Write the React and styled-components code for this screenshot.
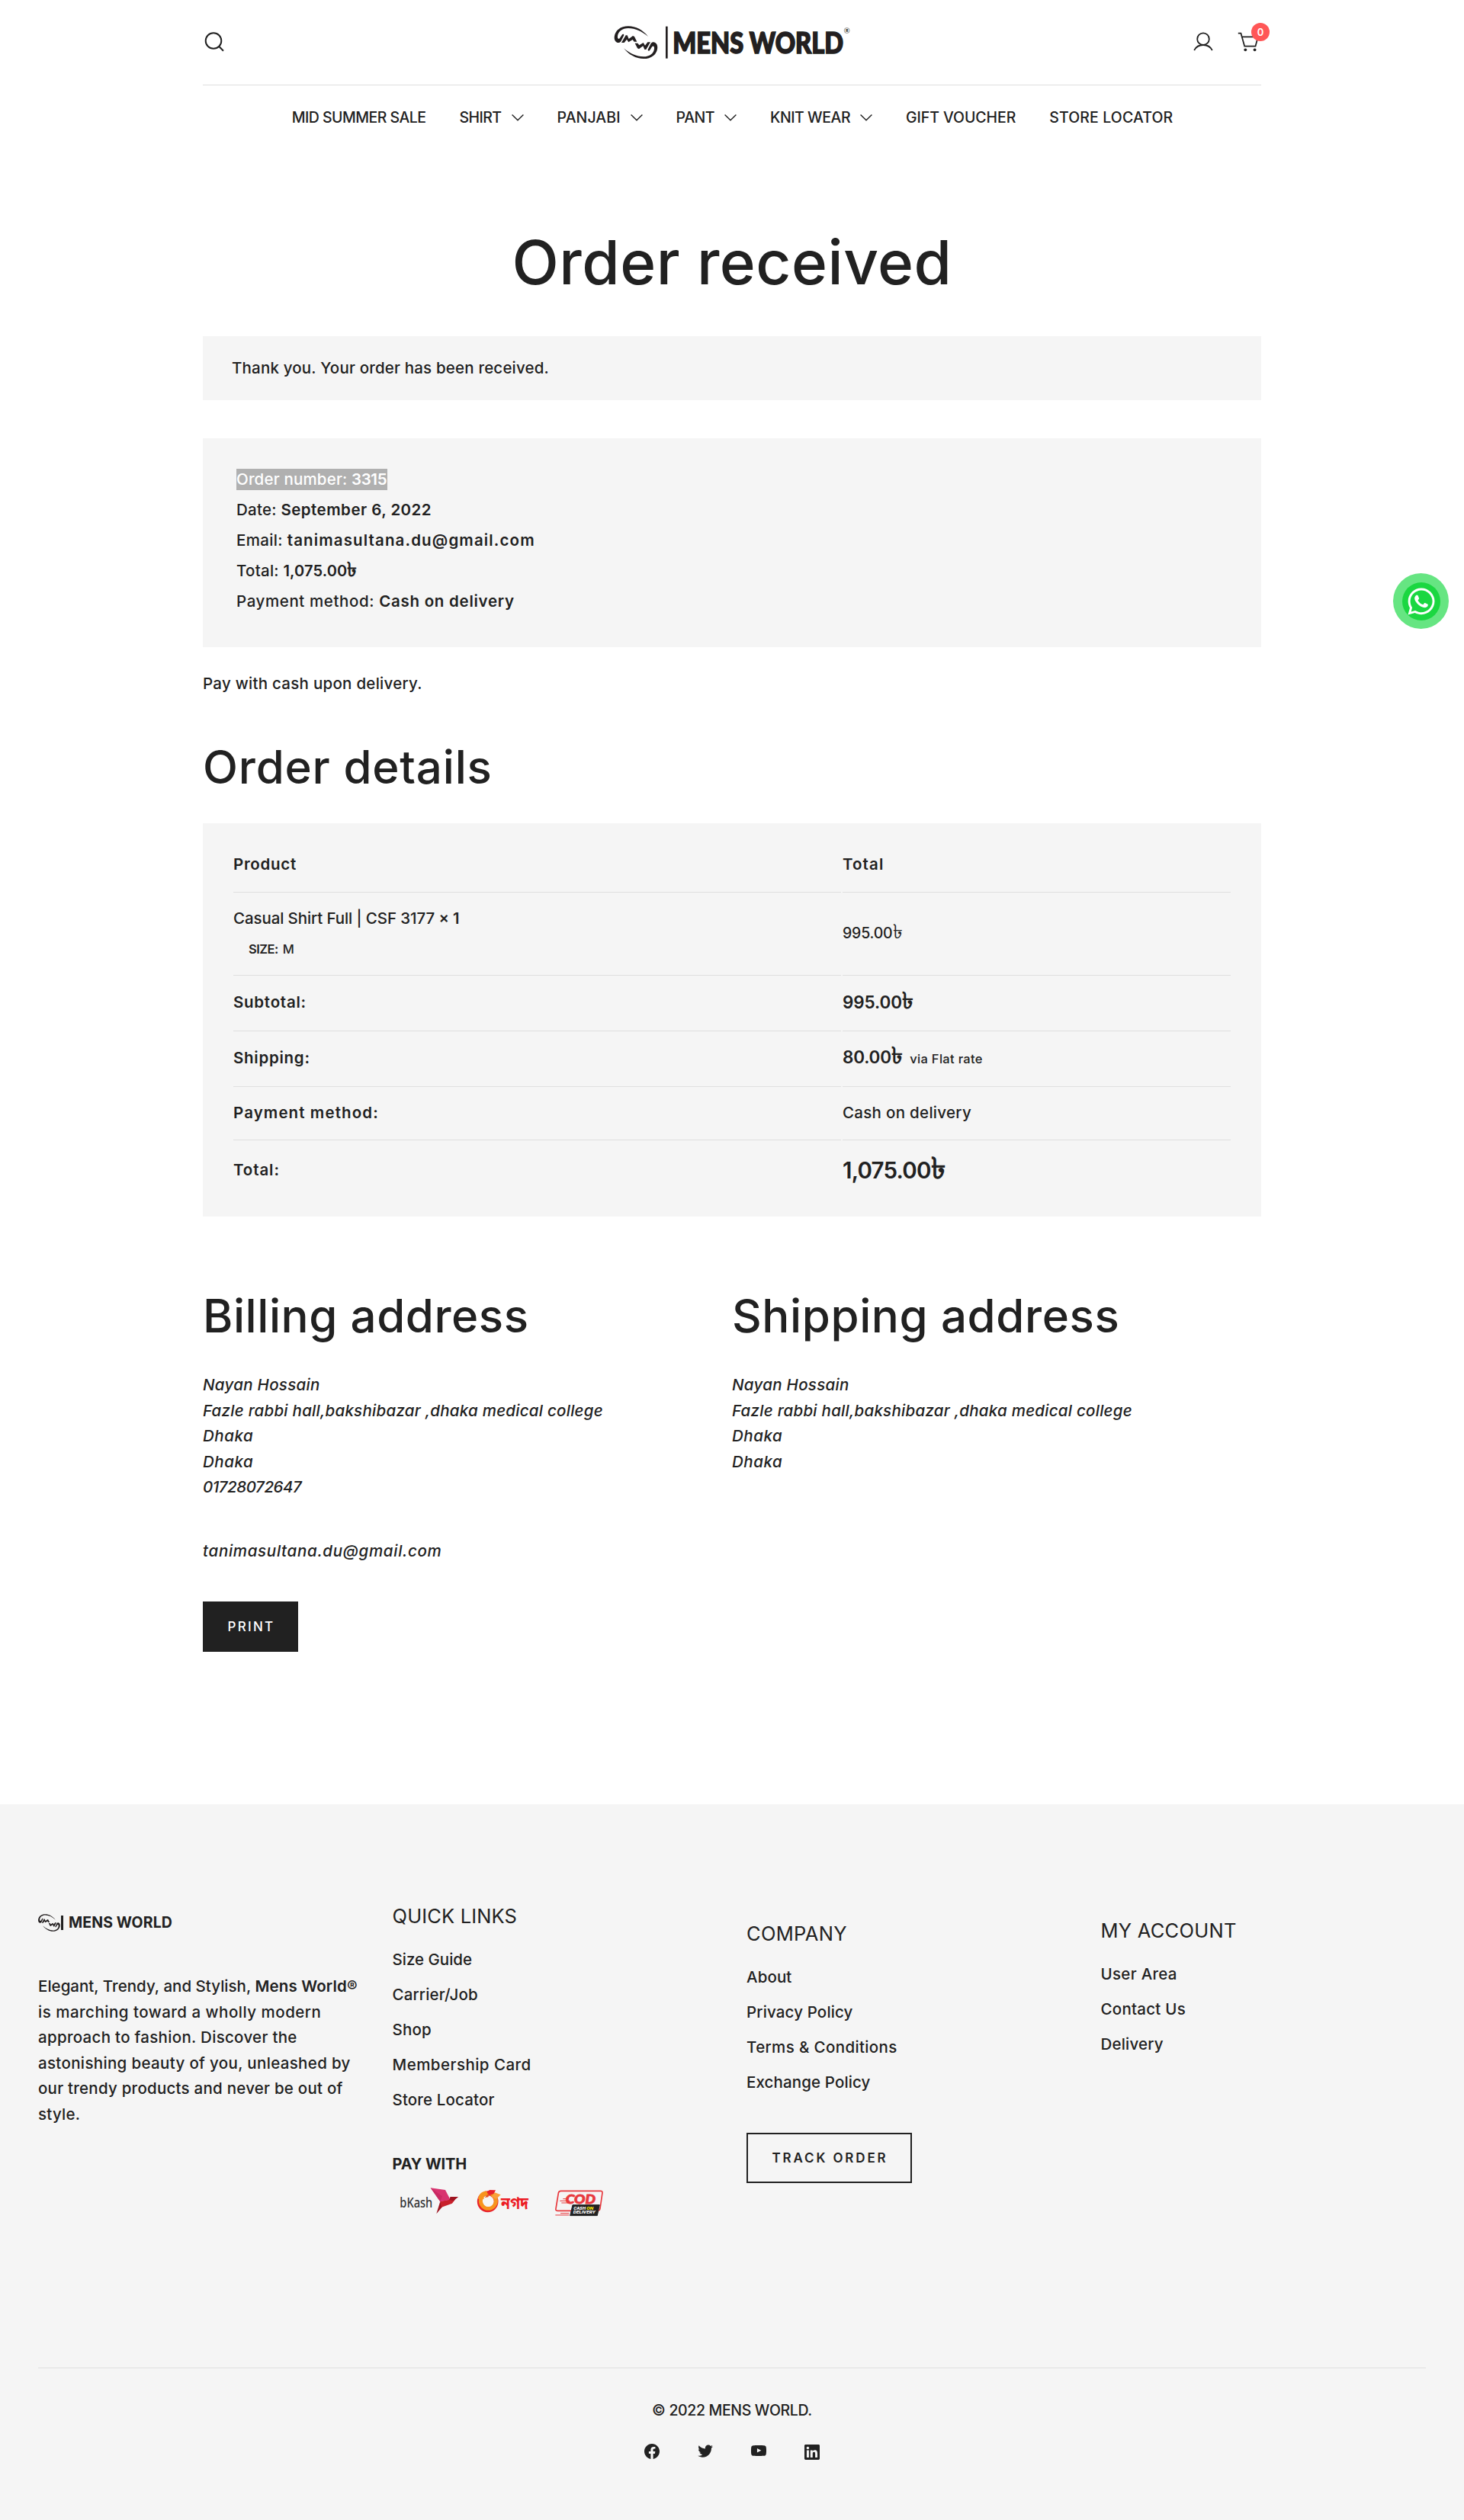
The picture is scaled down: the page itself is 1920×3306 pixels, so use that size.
import React from "react";
import styled, { createGlobalStyle, css } from "styled-components";
import { FaWhatsapp } from "react-icons/fa";

const INK = "#212121";
const PANEL = "#f5f5f5";
const LINE = "#dfdfdf";

const GlobalStyle = createGlobalStyle`
  * { box-sizing: border-box; }
  body {
    margin: 0;
    background: #fff;
    color: ${INK};
    font-family: Inter, "Noto Sans", sans-serif;
    font-size: 20.5px;
    font-weight: 500;
    line-height: 34px;
  }
  svg { display: block; flex: none; overflow: visible; }
`;

const T = styled.span`
  white-space: pre;
  letter-spacing: ${(p) => p.$ls || 0}px;
  ${(p) => p.$size && css`font-size: ${p.$size}px;`}
`;
const B = styled(T)`font-weight: 600;`;
const Sign = styled.span`
  font-size: 1.32em;
  line-height: 0;
  letter-spacing: 0;
`;
const Taka = () => <Sign>৳</Sign>;

/* ---------- layout shells ---------- */
const Page = styled.div`position: relative; width: 1920px;`;
const Container = styled.div`width: 1388px; margin: 0 auto;`;

/* ---------- header ---------- */
const TopBar = styled.div`
  display: grid;
  grid-template-columns: 1fr auto 1fr;
  align-items: start;
  height: 112px;
  border-bottom: 1px solid ${LINE};
`;
const SearchSlot = styled.div`padding: 42px 0 0 2px;`;
const LogoSlot = styled.div`padding: 32px 0 0 2px;`;
const Tools = styled.div`
  display: flex;
  justify-content: flex-end;
  gap: 32px;
  padding: 42px 3px 0 0;
`;
const CartButton = styled.div`position: relative;`;
const Badge = styled.span`
  position: absolute;
  top: -12px;
  right: -14px;
  width: 24px;
  height: 24px;
  border-radius: 50%;
  background: #ff5757;
  color: #fff;
  font-size: 13px;
  font-weight: 600;
  line-height: 25px;
  text-align: center;
`;
const Nav = styled.nav`
  display: flex;
  align-items: center;
  justify-content: center;
  gap: 44px;
  height: 84px;
  padding-left: 1px;
`;
const NavItem = styled.a`
  display: flex;
  align-items: center;
  gap: 13px;
  font-size: 19.5px;
`;

/* ---------- order ---------- */
const Title = styled.h1`
  margin: 100px 0 49px;
  font-size: 80px;
  font-weight: 500;
  line-height: 96px;
  text-align: center;
`;
const Heading = styled.h2`
  margin: ${(p) => p.$mt || 0}px 0 38px;
  font-size: 60px;
  font-weight: 500;
  line-height: 72px;
`;
const Notice = styled.div`
  display: flex;
  align-items: center;
  height: 84px;
  padding-left: 38px;
  background: ${PANEL};
`;
const Overview = styled.ul`
  list-style: none;
  margin: 50px 0 31px;
  padding: 34px 44px 40px;
  background: ${PANEL};
`;
const OverviewRow = styled.li`
  display: flex;
  align-items: center;
  height: 40px;
`;
const Selected = styled.span`
  display: block;
  width: 198px;
  background: #b0b0b0;
  color: #fff;
  line-height: 28px;
`;
const Note = styled.p`margin: 0;`;

const Details = styled.div`
  height: 516px;
  padding: 17px 40px 0;
  background: ${PANEL};
`;
const DetailRow = styled.div`
  display: grid;
  grid-template-columns: 797px 509px;
  gap: 2px;
  height: ${(p) => p.$h}px;
`;
const Cell = styled.div`
  display: flex;
  align-items: ${(p) => (p.$stack ? "flex-start" : "center")};
  ${(p) => p.$stack && css`flex-direction: column; justify-content: center; gap: 6px;`}
  padding-bottom: ${(p) => p.$pb || 0}px;
  border-bottom: 1px solid ${(p) => (p.$last ? "transparent" : LINE)};
`;
const Price = styled.div`display: flex; align-items: baseline;`;
const Meta = styled.div`
  display: flex;
  gap: 6px;
  padding-left: 20px;
  font-size: 16.5px;
`;

const Addresses = styled.div`
  display: grid;
  grid-template-columns: 1fr 1fr;
  margin-top: 94px;
`;
const Address = styled.address`
  font-style: italic;
  line-height: 33.5px;
`;
const AddressLine = styled.div`margin-top: ${(p) => p.$mt || 0}px;`;
const PrintButton = styled.button`
  display: block;
  width: 125px;
  height: 66px;
  margin-top: 50px;
  padding: 0 0 0 2px;
  border: 0;
  background: ${INK};
  color: #fff;
  font: 500 17px/66px Inter, sans-serif;
`;

/* ---------- footer ---------- */
const Footer = styled.footer`
  height: 939px;
  margin-top: 200px;
  padding: 0 50px;
  background: ${PANEL};
`;
const Columns = styled.div`
  display: grid;
  grid-template-columns: repeat(4, 426.5px);
  column-gap: 38px;
  height: 739px;
`;
const Column = styled.section`padding-top: ${(p) => p.$top}px;`;
const Brand = styled.div`
  display: flex;
  align-items: center;
  height: 34px;
  margin-bottom: 50px;
`;
const BrandBar = styled.span`
  width: 3px;
  height: 19px;
  margin: 0 7px 0 1px;
  background: ${INK};
`;
const BrandName = styled.span`
  font-weight: 700;
  font-size: 19.5px;
  white-space: pre;
`;
const About = styled.p`margin: 0; line-height: 33.5px;`;
const AboutLine = styled.span`display: block; white-space: nowrap;`;
const FootTitle = styled.h3`
  margin: 0 0 15.5px;
  font-size: 25.5px;
  font-weight: 400;
  line-height: 36px;
`;
const Links = styled.ul`list-style: none; margin: 0; padding: 0;`;
const LinkItem = styled.li`height: 46.2px; line-height: 46.2px;`;
const PayTitle = styled.div`margin-top: 43.5px; font-size: 20px; font-weight: 700;`;
const PayRow = styled.div`
  display: flex;
  align-items: flex-start;
  padding: 14px 0 0 9px;
`;
const PayLogo = styled.div`margin: ${(p) => p.$m};`;
const TrackButton = styled.button`
  display: block;
  width: 217px;
  height: 66px;
  margin-top: 43px;
  padding: 0 0 0 2px;
  border: 2px solid ${INK};
  background: transparent;
  color: ${INK};
  font: 600 17px/62px Inter, sans-serif;
`;
const Bottom = styled.div`
  display: flex;
  flex-direction: column;
  align-items: center;
  padding-top: 38px;
  border-top: 1px solid ${LINE};
`;
const Socials = styled.div`
  display: flex;
  align-items: center;
  gap: 50px;
  margin-top: 26px;
`;
const SocialLink = styled.a`padding-top: ${(p) => p.$pt || 0}px; padding-bottom: ${(p) => p.$pb || 0}px;`;

/* ---------- floating chat ---------- */
const ChatHalo = styled.a`
  position: absolute;
  top: 752px;
  left: 1827px;
  display: grid;
  place-items: center;
  width: 73px;
  height: 73px;
  border-radius: 50%;
  background: #66e582;
`;
const ChatCore = styled.span`
  display: grid;
  place-items: center;
  width: 50px;
  height: 50px;
  border-radius: 50%;
  background: #1bd741;
  color: #fff;
`;

/* ---------- drawings ---------- */
const HalfMark = () => (
  <>
    <path
      d="M210 84C186 64 160 51 132 51C108 51 92 64 90 82C89 92 93 95 98 91L107 77C110 72 116 74 115 79L103 103C97 112 84 109 79 98C74 84 80 66 92 56C104 46 117 43 132 43C161 43 190 58 210 84Z"
      fill="#231f20"
    />
    <path d="M105 108L122 79L128 79L134 93L150 81L156 84L166 104L155 104L149 96L133 106L126 95L116 108Z" fill="#231f20" />
  </>
);
const MarkShape = () => (
  <>
    <HalfMark />
    <g transform="rotate(180 162 107)"><HalfMark /></g>
  </>
);
const Logo = () => (
  <svg width="312" height="48" viewBox="75 36 936 144">
    <MarkShape />
    <rect x="279" y="44" width="8" height="126" fill="#231f20" />
    <text x="307" y="151" fontFamily="Lato, sans-serif" fontWeight="900" fontSize="115" fill="#231f20"
      stroke="#231f20" strokeWidth="5" textLength="671" lengthAdjust="spacingAndGlyphs">MENS WORLD</text>
    <circle cx="992" cy="60" r="10.5" fill="none" stroke="#555" strokeWidth="1.8" />
    <text x="992" y="66" textAnchor="middle" fontFamily="Inter, sans-serif" fontWeight="700" fontSize="16" fill="#231f20">R</text>
  </svg>
);
const SmallMark = () => (
  <svg width="29" height="23" viewBox="77 42 171 130" preserveAspectRatio="none"><MarkShape /></svg>
);
const SearchIcon = () => (
  <svg width="26" height="26" viewBox="0 0 26 26" fill="none" stroke={INK} strokeWidth="2">
    <circle cx="12" cy="11.5" r="10.3" /><path d="M19.3 19L25 24.8" />
  </svg>
);
const UserIcon = () => (
  <svg width="26" height="26" viewBox="0 0 26 26" fill="none" stroke={INK} strokeWidth="1.8">
    <circle cx="13" cy="9.2" r="7.8" /><path d="M1.2 24C3.4 19.6 7.6 17 13 17S22.6 19.6 24.8 24" />
  </svg>
);
const CartIcon = () => (
  <svg width="28" height="26" viewBox="0 0 28 26" fill="none" stroke={INK} strokeWidth="1.8">
    <path d="M.8 1.6H4.4L9.2 18.7H23.5L26.8 6.4H5.8" />
    <circle cx="10.3" cy="23.3" r="1.9" fill={INK} stroke="none" />
    <circle cx="22.6" cy="23.3" r="1.9" fill={INK} stroke="none" />
  </svg>
);
const Chevron = () => (
  <svg width="16" height="10" viewBox="0 0 16 10" fill="none" stroke={INK} strokeWidth="1.4">
    <path d="M.6 1.4L8 8.8L15.4 1.4" />
  </svg>
);
const Bkash = () => (
  <svg width="77.3" height="34.7" viewBox="72 60 232 104">
    <text x="73" y="139" fontFamily="'Noto Sans', sans-serif" fontSize="52" fill="#333" textLength="129" lengthAdjust="spacingAndGlyphs">bKash</text>
    <path d="M194 61L252 69L272 107L232 115Z" fill="#d8336f" />
    <path d="M194 61L240 94L232 115Z" fill="#c92a63" />
    <path d="M232 115L272 107L238 135Z" fill="#e2136e" />
    <path d="M232 115L240 136L217 163Z" fill="#9e1420" />
    <path d="M272 96L303 96L292 105L279 122L237 137L232 115L272 107Z" fill="#c8202b" />
    <path d="M272 96L303 96L292 105L286 112L268 108Z" fill="#9e1420" />
  </svg>
);
const Nagad = () => (
  <svg width="68.7" height="30.7" viewBox="378 66 206 92">
    <circle cx="422" cy="115" r="33" fill="none" stroke="#e8222b" strokeWidth="17" />
    <circle cx="424" cy="112" r="30" fill="none" stroke="#f7941e" strokeWidth="15" />
    <path d="M418 76L430 69L453 70L446 84L426 91Z" fill="#e8222b" />
    <path d="M449 79L473 88L456 104L436 97Z" fill="#f9a13a" />
    <path d="M384 104C386 86 400 74 418 73C404 82 402 94 408 104Z" fill="#f7941e" />
    <circle cx="424" cy="115" r="20" fill={PANEL} />
    <path d="M410 99C416 94 420 84 428 84L424 97Z" fill="#e8541e" />
    <text x="474" y="143" fontFamily="'Noto Sans Bengali', 'Noto Sans', sans-serif" fontWeight="700" fontSize="64" fill="#ec1c24"
      textLength="108" lengthAdjust="spacingAndGlyphs">নগদ</text>
  </svg>
);
const Cod = () => (
  <svg width="64" height="35.3" viewBox="684 70 192 106">
    <path d="M690 143L700 82Q702 74 710 74H866Q874 74 873 82L864 144Q862 152 854 152H696Q688 152 690 143Z" fill="none" stroke="#e8383d" strokeWidth="5" />
    <path d="M706 113H745M712 121H745M718 105H740" stroke="#e8383d" strokeWidth="3" />
    <text x="728" y="125" fontFamily="Lato, sans-serif" fontWeight="900" fontStyle="italic" fontSize="49" fill="#e8383d"
      stroke="#e8383d" strokeWidth="2.5" textLength="118" lengthAdjust="spacingAndGlyphs">COD</text>
    <path d="M756 129H862L853 171H746Z" fill="#222" stroke="#222" strokeWidth="3" strokeLinejoin="round" />
    <g fontFamily="Inter, sans-serif" fontWeight="800" fontStyle="italic" fontSize="16" fill="#fff">
      <text x="760" y="148" textLength="47" lengthAdjust="spacingAndGlyphs">CASH</text>
      <text x="811" y="148" fill="#ffef00" textLength="27" lengthAdjust="spacingAndGlyphs">ON</text>
      <text x="758" y="164" textLength="88" lengthAdjust="spacingAndGlyphs">DELIVERY</text>
    </g>
    <path d="M708 162H742M688 169H742" stroke="#e8383d" strokeWidth="3" />
  </svg>
);
const FACEBOOK = "M12 2C6.5 2 2 6.5 2 12c0 5 3.7 9.1 8.4 9.9v-7H7.9V12h2.5V9.8c0-2.5 1.5-3.9 3.8-3.9 1.1 0 2.2.2 2.2.2v2.5h-1.3c-1.2 0-1.6.8-1.6 1.6V12h2.8l-.4 2.9h-2.3v7C18.3 21.1 22 17 22 12c0-5.5-4.5-10-10-10z";
const TWITTER = "M22.23,5.924c-0.736,0.326-1.527,0.547-2.357,0.646c0.847-0.508,1.498-1.312,1.804-2.27c-0.793,0.47-1.671,0.812-2.606,0.996C18.324,4.498,17.257,4,16.077,4c-2.266,0-4.103,1.837-4.103,4.103c0,0.322,0.036,0.635,0.106,0.935C8.67,8.867,5.647,7.234,3.623,4.751C3.27,5.357,3.067,6.062,3.067,6.814c0,1.424,0.724,2.679,1.825,3.415c-0.673-0.021-1.305-0.206-1.859-0.513c0,0.017,0,0.034,0,0.052c0,1.988,1.414,3.647,3.292,4.023c-0.344,0.094-0.707,0.144-1.081,0.144c-0.264,0-0.521-0.026-0.772-0.074c0.522,1.63,2.038,2.816,3.833,2.85c-1.404,1.1-3.174,1.756-5.096,1.756c-0.331,0-0.658-0.019-0.979-0.057c1.816,1.164,3.973,1.843,6.29,1.843c7.547,0,11.675-6.252,11.675-11.675c0-0.178-0.004-0.355-0.012-0.531C20.985,7.47,21.68,6.747,22.23,5.924z";
const YOUTUBE = "M21.8,8.001c0,0-0.195-1.378-0.795-1.985c-0.76-0.797-1.613-0.801-2.004-0.847c-2.799-0.202-6.997-0.202-6.997-0.202h-0.009c0,0-4.198,0-6.997,0.202C4.608,5.216,3.756,5.22,2.995,6.016C2.395,6.623,2.2,8.001,2.2,8.001S2,9.62,2,11.238v1.517c0,1.618,0.2,3.237,0.2,3.237s0.195,1.378,0.795,1.985c0.761,0.797,1.76,0.771,2.205,0.855c1.6,0.153,6.8,0.201,6.8,0.201s4.203-0.006,7.001-0.209c0.391-0.047,1.243-0.051,2.004-0.847c0.6-0.607,0.795-1.985,0.795-1.985s0.2-1.618,0.2-3.237v-1.517C22,9.62,21.8,8.001,21.8,8.001z M9.935,14.594l-0.001-5.62l5.404,2.82L9.935,14.594z";
const LINKEDIN = "M19.7,3H4.3C3.582,3,3,3.582,3,4.3v15.4C3,20.418,3.582,21,4.3,21h15.4c0.718,0,1.3-0.582,1.3-1.3V4.3C21,3.582,20.418,3,19.7,3z M8.339,18.338H5.667v-8.59h2.672V18.338z M7.004,8.574c-0.857,0-1.549-0.694-1.549-1.548c0-0.855,0.691-1.548,1.549-1.548c0.854,0,1.547,0.694,1.547,1.548C8.551,7.881,7.858,8.574,7.004,8.574z M18.339,18.338h-2.669v-4.177c0-0.996-0.017-2.278-1.387-2.278c-1.389,0-1.601,1.086-1.601,2.206v4.249h-2.667v-8.59h2.559v1.174h0.037c0.356-0.675,1.227-1.387,2.526-1.387c2.703,0,3.203,1.779,3.203,4.092V18.338z";

/* ---------- data ---------- */
const NAV = [
  ["MID SUMMER SALE", -0.53, false],
  ["SHIRT", -0.55, true],
  ["PANJABI", 0.1, true],
  ["PANT", -0.5, true],
  ["KNIT WEAR", -0.45, true],
  ["GIFT VOUCHER", -0.07, false],
  ["STORE LOCATOR", 0.12, false],
];
const QUICK = [["Size Guide", 0], ["Carrier/Job", 0.15], ["Shop", 0.2], ["Membership Card", 0.47], ["Store Locator", 0.15]];
const COMPANY = [["About", 0.1], ["Privacy Policy", 0.15], ["Terms & Conditions", 0.37], ["Exchange Policy", 0.12]];
const ACCOUNT = [["User Area", 0.3], ["Contact Us", 0.25], ["Delivery", 0.2]];

const LinkList = ({ items }) => (
  <Links>
    {items.map(([label, ls]) => (
      <LinkItem key={label}><T $ls={ls}>{label}</T></LinkItem>
    ))}
  </Links>
);
const SharedAddress = () => (
  <>
    <AddressLine><T $ls={0.3}>Nayan Hossain</T></AddressLine>
    <AddressLine><T $ls={0.27}>Fazle rabbi hall,bakshibazar ,dhaka medical college</T></AddressLine>
    <AddressLine><T $ls={0.55}>Dhaka</T></AddressLine>
    <AddressLine><T $ls={0.55}>Dhaka</T></AddressLine>
  </>
);

export default function App() {
  return (
    <Page>
      <GlobalStyle />
      <Container>
        <TopBar>
          <SearchSlot><SearchIcon /></SearchSlot>
          <LogoSlot><Logo /></LogoSlot>
          <Tools>
            <UserIcon />
            <CartButton><CartIcon /><Badge>0</Badge></CartButton>
          </Tools>
        </TopBar>
        <Nav>
          {NAV.map(([label, ls, more]) => (
            <NavItem key={label}><T $ls={ls}>{label}</T>{more && <Chevron />}</NavItem>
          ))}
        </Nav>

        <Title><T $ls={0.5}>Order received</T></Title>
        <Notice><T $ls={0.18}>Thank you. Your order has been received.</T></Notice>
        <Overview>
          <OverviewRow><Selected><T $ls={0.18}>Order number: </T><B $ls={-0.4}>3315</B></Selected></OverviewRow>
          <OverviewRow><T $ls={0.25}>Date: </T><B $ls={0.47}>September 6, 2022</B></OverviewRow>
          <OverviewRow><T $ls={0.35}>Email: </T><B $ls={1.13}>tanimasultana.du@gmail.com</B></OverviewRow>
          <OverviewRow><T $ls={0.25}>Total: </T><B $size={20} $ls={0.15}>1,075.00<Taka /></B></OverviewRow>
          <OverviewRow><T $ls={0.6}>Payment method: </T><B $ls={0.73}>Cash on delivery</B></OverviewRow>
        </Overview>
        <Note><T $ls={0.27}>Pay with cash upon delivery.</T></Note>

        <Heading $mt={56}><T $ls={0.8}>Order details</T></Heading>
        <Details>
          <DetailRow $h={74}>
            <Cell><B $ls={0.7}>Product</B></Cell>
            <Cell><B $ls={1.1}>Total</B></Cell>
          </DetailRow>
          <DetailRow $h={109}>
            <Cell $stack>
              <div><T $ls={-0.1}>Casual Shirt Full | CSF 3177 </T><B $size={20}>× 1</B></div>
              <Meta><B $ls={-0.5}>SIZE:</B><T>M</T></Meta>
            </Cell>
            <Cell $pb={2}><T $size={19.5} $ls={-0.2}>995.00<Taka /></T></Cell>
          </DetailRow>
          <DetailRow $h={73}>
            <Cell $pb={2}><B $ls={0.73}>Subtotal:</B></Cell>
            <Cell $pb={2}><B $size={22.5} $ls={-0.1}>995.00<Taka /></B></Cell>
          </DetailRow>
          <DetailRow $h={73}>
            <Cell $pb={2}><B $ls={0.73}>Shipping:</B></Cell>
            <Cell $pb={2}>
              <Price><B $size={22.5} $ls={-0.2}>80.00<Taka /></B><T $size={16.5} $ls={0.3}>  via Flat rate</T></Price>
            </Cell>
          </DetailRow>
          <DetailRow $h={70}>
            <Cell $pb={2}><B $ls={1.1}>Payment method:</B></Cell>
            <Cell $pb={2}><T $ls={0.3}>Cash on delivery</T></Cell>
          </DetailRow>
          <DetailRow $h={78}>
            <Cell $last><B $ls={0.9}>Total:</B></Cell>
            <Cell $last><B $size={29.5} $ls={-0.8}>1,075.00<Taka /></B></Cell>
          </DetailRow>
        </Details>

        <Addresses>
          <div>
            <Heading><T $ls={0.55}>Billing address</T></Heading>
            <Address>
              <SharedAddress />
              <AddressLine><T $ls={-0.45}>01728072647</T></AddressLine>
              <AddressLine $mt={50}><T $ls={0.7}>tanimasultana.du@gmail.com</T></AddressLine>
            </Address>
          </div>
          <div>
            <Heading><T $ls={0.6}>Shipping address</T></Heading>
            <Address><SharedAddress /></Address>
          </div>
        </Addresses>
        <PrintButton><T $ls={2.3}>PRINT</T></PrintButton>
      </Container>

      <Footer>
        <Columns>
          <Column $top={138}>
            <Brand><SmallMark /><BrandBar /><BrandName><T $ls={0.1}>MENS WORLD</T></BrandName></Brand>
            <About>
              <AboutLine><T $ls={0.02}>Elegant, Trendy, and Stylish, </T><B $ls={0.15}>Mens World®</B></AboutLine>
              <AboutLine><T $ls={0.5}>is marching toward a wholly modern</T></AboutLine>
              <AboutLine><T $ls={0.3}>approach to fashion. Discover the</T></AboutLine>
              <AboutLine><T $ls={0.34}>astonishing beauty of you, unleashed by</T></AboutLine>
              <AboutLine><T $ls={0.24}>our trendy products and never be out of</T></AboutLine>
              <AboutLine><T $ls={0.25}>style.</T></AboutLine>
            </About>
          </Column>
          <Column $top={129}>
            <FootTitle><T $ls={0.15}>QUICK LINKS</T></FootTitle>
            <LinkList items={QUICK} />
            <PayTitle><T $ls={-0.15}>PAY WITH</T></PayTitle>
            <PayRow>
              <PayLogo $m="0"><Bkash /></PayLogo>
              <PayLogo $m="2px 0 0 24.7px"><Nagad /></PayLogo>
              <PayLogo $m="3px 0 0 33.3px"><Cod /></PayLogo>
            </PayRow>
          </Column>
          <Column $top={152}>
            <FootTitle><T $ls={0.3}>COMPANY</T></FootTitle>
            <LinkList items={COMPANY} />
            <TrackButton><T $ls={2.85}>TRACK ORDER</T></TrackButton>
          </Column>
          <Column $top={148}>
            <FootTitle><T $ls={0.25}>MY ACCOUNT</T></FootTitle>
            <LinkList items={ACCOUNT} />
          </Column>
        </Columns>
        <Bottom>
          <T $size={19.5} $ls={-0.35}>© 2022 MENS WORLD.</T>
          <Socials>
            <SocialLink><svg width="20" height="20" viewBox="2 2 20 20" fill={INK}><path d={FACEBOOK} /></svg></SocialLink>
            <SocialLink $pb={1}><svg width="20" height="17" viewBox="2 3.5 20.3 17" fill={INK}><path d={TWITTER} /></svg></SocialLink>
            <SocialLink $pb={2}><svg width="20" height="14" viewBox="2 5 20 14" fill={INK}><path d={YOUTUBE} /></svg></SocialLink>
            <SocialLink $pt={2}><svg width="20" height="20" viewBox="3 3 18 18" fill={INK}><path d={LINKEDIN} /></svg></SocialLink>
          </Socials>
        </Bottom>
      </Footer>

      <ChatHalo><ChatCore><FaWhatsapp size={40} /></ChatCore></ChatHalo>
    </Page>
  );
}
